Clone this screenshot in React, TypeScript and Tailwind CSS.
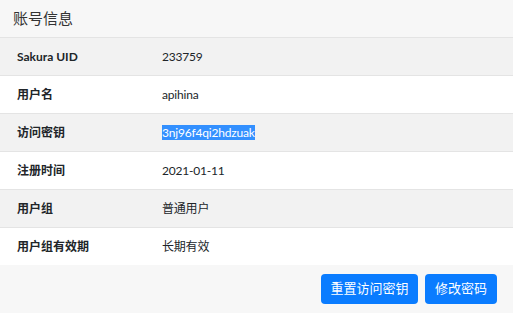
import React from "react";

const rows: { label: string; value: string; sel?: boolean }[] = [
  { label: "Sakura UID", value: "233759" },
  { label: "用户名", value: "apihina" },
  { label: "访问密钥", value: "3nj96f4qi2hdzuak", sel: true },
  { label: "注册时间", value: "2021-01-11" },
  { label: "用户组", value: "普通用户" },
  { label: "用户组有效期", value: "长期有效" },
];

export default function App() {
  return (
    <div
      className="w-[513px] h-[313px] bg-white flex flex-col text-[#212529]"
      style={{ fontFamily: 'Lato, "Noto Sans CJK SC", sans-serif' }}
    >
      <div className="h-[37px] bg-[#f7f7f7] flex items-center pl-[13px]">
        <span className="text-[15px] font-normal text-[#333]">账号信息</span>
      </div>
      <div className="flex flex-col">
        {rows.map((r, i) => (
          <div
            key={r.label}
            className={`h-[38px] flex items-center border-t border-[#e4e4e4] text-[12px] ${
              i % 2 === 0 ? "bg-[#f2f2f2]" : "bg-white"
            }`}
          >
            <div className="w-[145px] pl-[17px] font-bold">{r.label}</div>
            <div className="pl-[17px] tracking-[-0.2px]">
              {r.sel ? (
                <span className="bg-[#3390ff] text-white">{r.value}</span>
              ) : (
                r.value
              )}
            </div>
          </div>
        ))}
      </div>
      <div className="flex-1 bg-[#f7f7f7] flex justify-end items-start pt-[9px] pr-[16px] gap-[7px]">
        <button className="h-[30px] w-[97px] rounded-[4px] bg-[#0a7cff] text-white text-[13px]">
          重置访问密钥
        </button>
        <button className="h-[30px] w-[72px] rounded-[4px] bg-[#0a7cff] text-white text-[13px]">
          修改密码
        </button>
      </div>
    </div>
  );
}
